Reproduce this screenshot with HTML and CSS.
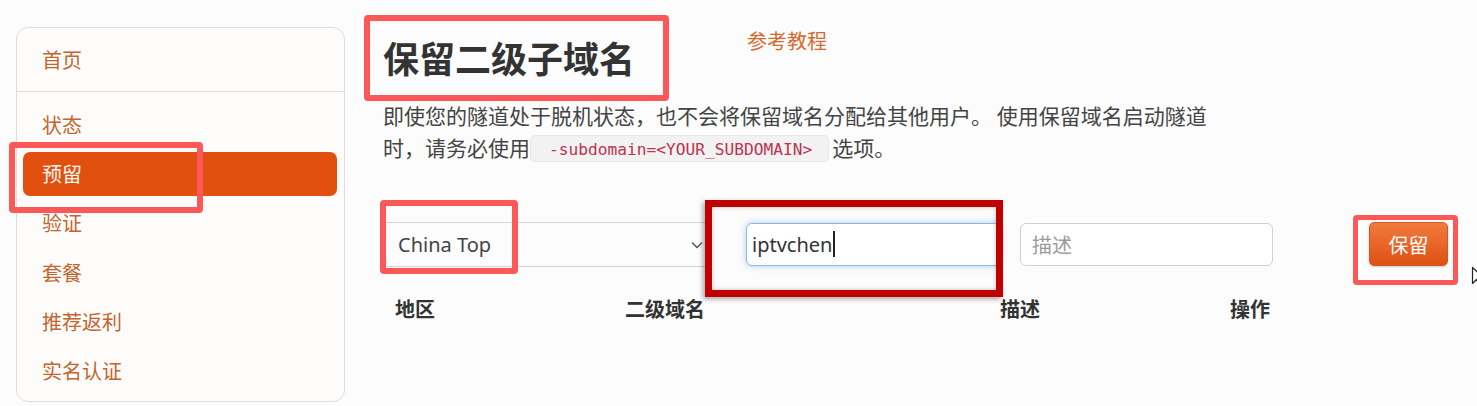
FILE: index.html
```html
<!DOCTYPE html>
<html lang="zh-CN">
<head>
<meta charset="utf-8">
<title>保留二级子域名</title>
<link rel="stylesheet" href="styles.css">
</head>
<body>
<div class="page">
  <aside class="sidebar">
    <div class="nav-home"><a class="nav-link" href="#">首页</a></div>
    <ul class="nav-list">
      <li><a class="nav-link" href="#">状态</a></li>
      <li><a class="nav-link active" href="#">预留</a></li>
      <li><a class="nav-link" href="#">验证</a></li>
      <li><a class="nav-link" href="#">套餐</a></li>
      <li><a class="nav-link" href="#">推荐返利</a></li>
      <li><a class="nav-link" href="#">实名认证</a></li>
    </ul>
  </aside>

  <main class="content">
    <header class="title-row">
      <h1 class="title">保留二级子域名</h1>
      <a class="guide" href="#">参考教程</a>
    </header>
    <p class="intro">即使您的隧道处于脱机状态，也不会将保留域名分配给其他用户。 使用保留域名启动隧道时，请务必使用<code class="opt">-subdomain=&lt;YOUR_SUBDOMAIN&gt;</code>选项。</p>

    <form class="reserve-form">
      <div class="select-box">
        <span class="select-value">China Top</span>
        <svg class="chevron" width="12" height="8" viewBox="0 0 12 8"><path d="M1 1.5 6 6.5 11 1.5" fill="none" stroke="#555" stroke-width="1.4"/></svg>
      </div>
      <div class="field field-focus"><span class="field-text">iptvchen</span><span class="caret"></span></div>
      <div class="field field-desc"><span class="placeholder">描述</span></div>
      <button class="btn-reserve" type="button">保留</button>
    </form>

    <div class="table-head">
      <span>地区</span>
      <span>二级域名</span>
      <span>描述</span>
      <span>操作</span>
    </div>

    <div class="bottom-link"><a class="guide" href="#">参考教程</a></div>
  </main>

  <!-- highlight frames drawn over the page -->
  <div class="mark mark-title"></div>
  <div class="mark mark-nav"></div>
  <div class="mark mark-region"></div>
  <div class="mark mark-domain"></div>
  <div class="mark mark-btn"></div>

  <svg class="pointer" width="14" height="22" viewBox="0 0 14 22"><path d="M1.5 1.5v16l4-4 3 6.5 2.5-1.2-3-6.3h5.5z" fill="#fff" stroke="#222" stroke-width="1.2" stroke-linejoin="round"/></svg>
</div>
</body>
</html>
```

FILE: styles.css
```css
* { box-sizing: border-box; }

html, body {
  margin: 0;
  padding: 0;
  background: #fcfcfc;
  height: 406px;
  overflow: hidden;
}

body {
  font-family: "Noto Sans", "Noto Sans CJK SC", sans-serif;
  color: #444;
}

.page {
  position: relative;
  display: flex;
  align-items: flex-start;
  padding-left: 16px;
  width: 1477px;
  height: 406px;
  overflow: hidden;
}

/* ---------- sidebar ---------- */
.sidebar {
  width: 329px;
  margin-top: 27px;
  background: #fdfcfb;
  border: 1px solid #dedede;
  border-radius: 12px;
  padding-bottom: 6px;
  flex-shrink: 0;
}

.nav-home {
  height: 64px;
  display: flex;
  align-items: center;
  border-bottom: 1px solid #dcdcdc;
  padding-top: 0;
}

.nav-list {
  list-style: none;
  margin: 0;
  padding: 8px 0 0;
}

.nav-list li {
  height: 49.2px;
  display: flex;
  align-items: center;
}

.nav-link {
  display: flex;
  align-items: center;
  width: 100%;
  height: 44px;
  margin: 0 7px 0 6px;
  padding-left: 19px;
  border-radius: 7px;
  font-family: "Noto Sans CJK SC", sans-serif;
  font-size: 20px;
  color: #c2652e;
  text-decoration: none;
}

.nav-link.active {
  background: #e2500f;
  color: #fff6ee;
}

/* ---------- main content ---------- */
.content {
  margin-left: 38px;
  padding-top: 34px;
  flex: 1;
}

.title-row {
  display: flex;
  align-items: flex-start;
}

.title {
  margin: 0;
  font-family: "Noto Sans CJK SC", sans-serif;
  font-size: 36px;
  line-height: 46px;
  font-weight: 700;
  color: #333;
}

.guide {
  font-family: "Noto Sans CJK SC", sans-serif;
  font-size: 20px;
  color: #d46a2c;
  text-decoration: none;
}

.title-row .guide {
  margin-left: 112px;
  margin-top: -8px;
  line-height: 30px;
}

.intro {
  margin: 19px 0 0;
  width: 850px;
  font-family: "Noto Sans CJK SC", sans-serif;
  font-size: 21px;
  line-height: 32px;
  color: #444;
}

.opt {
  display: inline-block;
  margin: 0 3px 0 0;
  padding: 0 16px 0 18px;
  height: 27px;
  line-height: 27px;
  vertical-align: 1px;
  background: #f2f2f2;
  border: 1px solid #e6e6e6;
  border-radius: 5px;
  font-family: "DejaVu Sans Mono", monospace;
  font-size: 16.2px;
  color: #bd3350;
}

/* ---------- reserve form ---------- */
.reserve-form {
  display: flex;
  align-items: center;
  margin-top: 59px;
  height: 44px;
}

.select-box {
  display: flex;
  align-items: center;
  justify-content: space-between;
  width: 328px;
  height: 45px;
  margin-left: -3px;
  padding: 0 5px 0 18px;
  border-top: 1px solid #d2d2d2;
  border-bottom: 1px solid #d2d2d2;
  background: #fcfcfc;
}

.select-value {
  font-size: 20px;
  color: #444;
}

.chevron { margin-top: 2px; }

.field {
  display: flex;
  align-items: center;
  height: 43px;
  border-radius: 6px;
  background: #fff;
  font-size: 20px;
}

.field-focus {
  width: 254px;
  margin-left: 38px;
  padding-left: 5px;
  border: 1px solid #8db8df;
  box-shadow: 0 0 7px rgba(110, 165, 225, 0.55);
  color: #333;
}

.caret {
  width: 1.5px;
  height: 26px;
  margin-left: 1px;
  background: #222;
}

.field-desc {
  width: 253px;
  margin-left: 20px;
  padding-left: 11px;
  border: 1px solid #d0d0d0;
}

.placeholder {
  font-family: "Noto Sans CJK SC", sans-serif;
  color: #9a9a9a;
}

.btn-reserve {
  width: 79px;
  height: 44px;
  margin-left: 96px;
  border: 1px solid #d7581f;
  border-radius: 5px;
  background: linear-gradient(#f27a3c, #dd5114);
  box-shadow: 0 1px 2px rgba(0, 0, 0, 0.2);
  font-family: "Noto Sans CJK SC", sans-serif;
  font-size: 20px;
  color: #fff;
  padding: 0;
}

/* ---------- table header ---------- */
.table-head {
  display: grid;
  grid-template-columns: 230px 375px 230px auto;
  margin-top: 28px;
  padding-left: 12px;
  font-family: "Noto Sans CJK SC", sans-serif;
  font-size: 20px;
  line-height: 30px;
  font-weight: 700;
  color: #333;
}

.bottom-link {
  margin-top: 88px;
  padding-left: 364px;
  line-height: 30px;
}

/* ---------- highlight frames ---------- */
.mark {
  position: absolute;
  border: 6px solid #fd5858;
  border-radius: 4px;
  pointer-events: none;
}

.mark-title  { left: 364px;  top: 15px;  width: 305px; height: 86px; }
.mark-nav    { left: 9px;    top: 142px; width: 194px; height: 71px; }
.mark-region { left: 380px;  top: 200px; width: 138px; height: 74px; }
.mark-btn    { left: 1353px; top: 215px; width: 105px; height: 70px; border-width: 5px; }

.mark-domain {
  left: 705px;
  top: 200px;
  width: 298px;
  height: 97px;
  border: 7px solid #bf0000;
  border-radius: 0;
  box-shadow: -2px 2px 5px rgba(0, 0, 0, 0.35), inset 0 0 4px rgba(0, 0, 0, 0.25);
}

.pointer {
  position: absolute;
  left: 1471px;
  top: 266px;
}
```
